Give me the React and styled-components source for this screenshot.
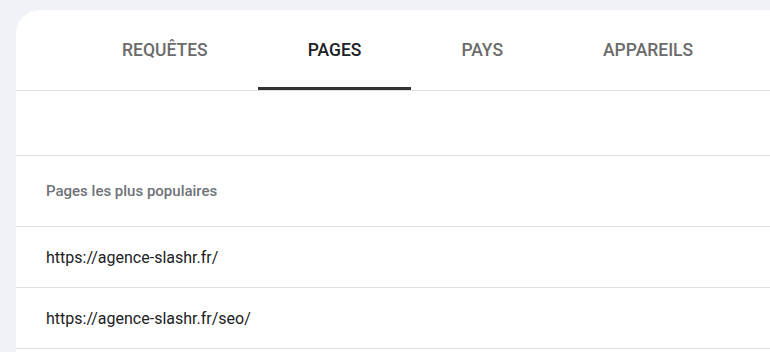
import React from "react";
import styled, { createGlobalStyle } from "styled-components";

const Global = createGlobalStyle`
  html, body { margin: 0; padding: 0; background: #eff3f8; }
  body { font-family: Roboto, "Noto Sans", Arial, sans-serif; overflow: hidden; }
`;

const Page = styled.div`
  width: 770px;
  height: 352px;
  padding: 10px 0 0 16px;
  box-sizing: border-box;
  overflow: hidden;
`;

const Card = styled.div`
  background: #ffffff;
  border-top-left-radius: 24px;
  width: 800px;
  height: 400px;
`;

const TabList = styled.div`
  display: flex;
  height: 81px;
  padding-left: 56px;
  border-bottom: 1px solid #e0e0e0;
  box-sizing: border-box;
`;

const Tab = styled.div`
  position: relative;
  display: flex;
  align-items: center;
  justify-content: center;
  padding: 0 50px;
  font-size: 17.5px;
  font-weight: 500;
  text-transform: uppercase;
  color: ${(p) => (p.$active ? "#202124" : "#6b6b6b")};
  &::after {
    content: "";
    display: ${(p) => (p.$active ? "block" : "none")};
    position: absolute;
    left: 0;
    right: 0;
    bottom: 0;
    height: 3px;
    background: #333333;
  }
`;

const Spacer = styled.div`
  height: 65px;
  border-bottom: 1px solid #e0e0e0;
  box-sizing: border-box;
`;

const HeaderRow = styled.div`
  height: 71px;
  display: flex;
  align-items: center;
  padding-left: 30px;
  border-bottom: 1px solid #e0e0e0;
  box-sizing: border-box;
  font-size: 15px;
  font-weight: 500;
  color: #6f7377;
`;

const Row = styled.div`
  height: 61px;
  display: flex;
  align-items: center;
  padding-left: 30px;
  border-bottom: 1px solid #e0e0e0;
  box-sizing: border-box;
  font-size: 16px;
  color: #202124;
`;

const tabs = ["Requêtes", "Pages", "Pays", "Appareils"];
const rows = ["https://agence-slashr.fr/", "https://agence-slashr.fr/seo/"];

export default function App() {
  return (
    <>
      <Global />
      <Page>
        <Card>
          <TabList>
            {tabs.map((t) => (
              <Tab key={t} $active={t === "Pages"}>{t}</Tab>
            ))}
          </TabList>
          <Spacer />
          <HeaderRow>Pages les plus populaires</HeaderRow>
          {rows.map((r) => (
            <Row key={r}>{r}</Row>
          ))}
        </Card>
      </Page>
    </>
  );
}
